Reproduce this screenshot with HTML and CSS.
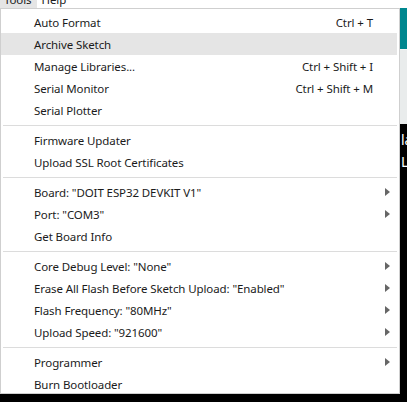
FILE: index.html
```html
<!DOCTYPE html>
<html lang="en">
<head>
    <meta charset="UTF-8">
    <title>Tools menu</title>
    <link rel="stylesheet" href="styles.css">
</head>
<body>
    <div class="menubar">
        <span class="menubar-item active">Tools</span>
        <span class="menubar-item">Help</span>
    </div>

    <div class="window">
        <div class="menu">
            <div class="item"><span>Auto Format</span><span class="shortcut">Ctrl + T</span></div>
            <div class="item hover"><span>Archive Sketch</span></div>
            <div class="item"><span>Manage Libraries...</span><span class="shortcut">Ctrl + Shift + I</span></div>
            <div class="item"><span>Serial Monitor</span><span class="shortcut">Ctrl + Shift + M</span></div>
            <div class="item"><span>Serial Plotter</span></div>
            <div class="separator"></div>
            <div class="item"><span>Firmware Updater</span></div>
            <div class="item"><span>Upload SSL Root Certificates</span></div>
            <div class="separator"></div>
            <div class="item"><span>Board: "DOIT ESP32 DEVKIT V1"</span><span class="arrow"></span></div>
            <div class="item"><span>Port: "COM3"</span><span class="arrow"></span></div>
            <div class="item"><span>Get Board Info</span></div>
            <div class="separator"></div>
            <div class="item"><span>Core Debug Level: "None"</span><span class="arrow"></span></div>
            <div class="item"><span>Erase All Flash Before Sketch Upload: "Enabled"</span><span class="arrow"></span></div>
            <div class="item"><span>Flash Frequency: "80MHz"</span><span class="arrow"></span></div>
            <div class="item"><span>Upload Speed: "921600"</span><span class="arrow"></span></div>
            <div class="separator"></div>
            <div class="item"><span>Programmer</span><span class="arrow"></span></div>
            <div class="item"><span>Burn Bootloader</span></div>
        </div>

        <!-- editor window peeking out behind the menu -->
        <div class="editor">
            <div class="editor-header"></div>
            <div class="editor-toolbar"></div>
            <div class="console">
                <div>la</div>
                <div>Le</div>
            </div>
        </div>
    </div>
</body>
</html>
```

FILE: styles.css
```css
body {
    margin: 0;
    background-color: #000;
    font-family: "Noto Sans", "Open Sans", sans-serif;
    font-size: 11.5px;
    letter-spacing: -0.1px;
    color: #1b1b1b;
    overflow: hidden;
}

.menubar {
    display: flex;
    height: 8px;
    background-color: #fff;
    overflow: hidden;
}

.menubar-item {
    align-self: flex-end;
    line-height: 16px;
    padding: 0 6px 0 4px;
}

.menubar-item.active {
    background-color: #e5e5e5;
}

.window {
    display: flex;
    height: 386px;
}

.menu {
    width: 398px;
    background-color: #fff;
    border: 1px solid #cfcfcf;
    padding: 2px 0;
    flex-shrink: 0;
}

.item {
    display: grid;
    grid-template-columns: 1fr auto 24px;
    align-items: center;
    height: 22px;
    padding-left: 33px;
    margin-right: 2px;
    white-space: nowrap;
}

.item.hover {
    background-color: #e5e5e5;
}

.shortcut {
    grid-column: 2;
}

.arrow {
    grid-column: 3;
    margin-left: 12px;
    width: 0;
    height: 0;
    border-top: 4px solid transparent;
    border-bottom: 4px solid transparent;
    border-left: 5px solid #666;
}

.separator {
    height: 1px;
    background-color: #dcdcdc;
    margin: 4px 2px 3px 2px;
}

.editor {
    flex: 1;
    display: flex;
    flex-direction: column;
}

.editor-header {
    height: 41px;
    background-color: #00878f;
}

.editor-toolbar {
    height: 74px;
    background-color: #e9ecec;
    border-top: 1px solid #f6f6f6;
}

.console {
    flex: 1;
    background-color: #000;
    color: #fff;
    font-size: 14px;
    line-height: 22px;
    padding-top: 5px;
    padding-left: 1px;
}
```
